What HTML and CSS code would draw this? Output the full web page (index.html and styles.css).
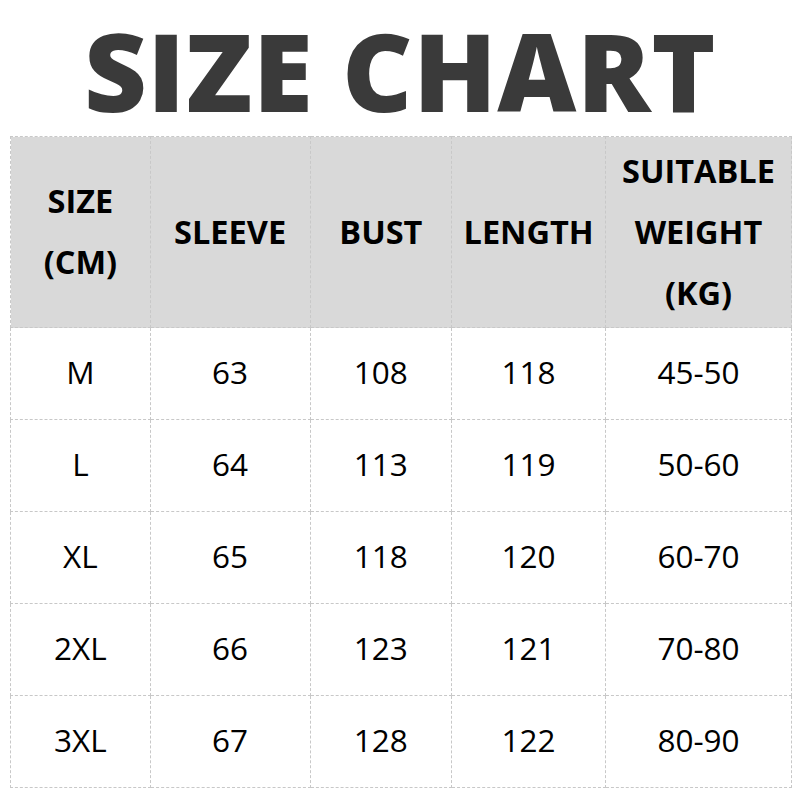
FILE: index.html
```html
<!DOCTYPE html>
<html>
<head>
<meta charset="utf-8">
<link rel="stylesheet" href="styles.css">
</head>
<body>
<div class="page">
  <h1 class="title">SIZE CHART</h1>
  <table class="chart">
    <thead>
      <tr>
        <th class="c1">SIZE<br>(CM)</th>
        <th class="c2">SLEEVE</th>
        <th class="c3">BUST</th>
        <th class="c4">LENGTH</th>
        <th class="c5">SUITABLE<br>WEIGHT<br>(KG)</th>
      </tr>
    </thead>
    <tbody>
      <tr><td>M</td><td>63</td><td>108</td><td>118</td><td>45-50</td></tr>
      <tr><td>L</td><td>64</td><td>113</td><td>119</td><td>50-60</td></tr>
      <tr><td>XL</td><td>65</td><td>118</td><td>120</td><td>60-70</td></tr>
      <tr><td>2XL</td><td>66</td><td>123</td><td>121</td><td>70-80</td></tr>
      <tr><td>3XL</td><td>67</td><td>128</td><td>122</td><td>80-90</td></tr>
    </tbody>
  </table>
</div>
</body>
</html>
```
FILE: styles.css
```css
html, body {
  margin: 0;
  padding: 0;
  background: #fff;
}
.page {
  width: 800px;
  height: 800px;
  font-family: "Open Sans", "Noto Sans", sans-serif;
}
.title {
  margin: 0;
  height: 136px;
  padding-top: 8px;
  box-sizing: border-box;
  text-align: center;
  font-size: 109px;
  font-weight: 800;
  line-height: 124px;
  letter-spacing: 0.5px;
  color: #3a3a3a;
}
.chart {
  margin-left: 10px;
  border-collapse: collapse;
  table-layout: fixed;
  width: 782px;
}
.chart th, .chart td {
  border: 1px dashed #c8c8c8;
  text-align: center;
  padding: 0;
  color: #000;
}
.chart th {
  background: #d9d9d9;
  height: 191px;
  font-weight: 700;
  font-size: 32.5px;
  line-height: 61px;
  padding-bottom: 2px;
  box-sizing: border-box;
}
.chart td {
  height: 92px;
  padding-bottom: 5px;
  box-sizing: border-box;
  font-size: 31.5px;
  font-weight: 400;
}
.c1 { width: 139px; }
.c2 { width: 159px; }
.c3 { width: 141px; }
.c4 { width: 153px; }
.c5 { width: 185px; }
```
